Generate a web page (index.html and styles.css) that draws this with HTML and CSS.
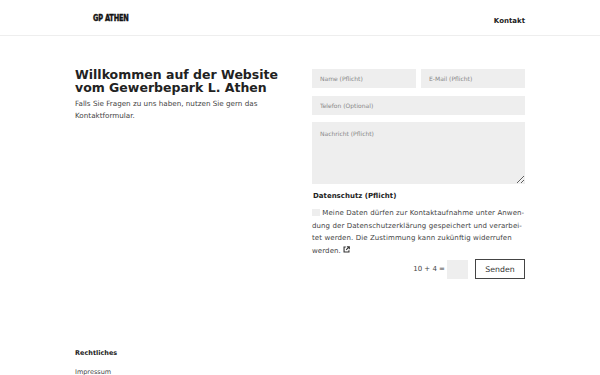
FILE: index.html
```html
<!DOCTYPE html>
<html lang="de">
<head>
    <meta charset="UTF-8">
    <meta name="viewport" content="width=device-width, initial-scale=1.0">
    <title>GP Athen</title>
    <link rel="stylesheet" href="styles.css">
</head>
<body>
    <header class="site-header">
        <a class="logo" href="#">GP ATHEN</a>
        <nav class="nav">
            <a href="#kontakt">Kontakt</a>
        </nav>
    </header>

    <main class="content">
        <section class="intro">
            <h1>Willkommen auf der Website vom Gewerbepark L. Athen</h1>
            <p>Falls Sie Fragen zu uns haben, nutzen Sie gern das Kontaktformular.</p>
        </section>

        <form class="contact" id="kontakt">
            <div class="row">
                <input type="text" placeholder="Name (Pflicht)">
                <input type="email" placeholder="E-Mail (Pflicht)">
            </div>
            <input type="tel" placeholder="Telefon (Optional)">
            <textarea placeholder="Nachricht (Pflicht)"></textarea>

            <div class="privacy">
                <h3>Datenschutz (Pflicht)</h3>
                <p>
                    <span class="check"></span>
                    Meine Daten dürfen zur Kontaktaufnahme unter Anwen&shy;dung der Datenschutzerklärung gespeichert und verarbei&shy;tet werden. Die Zustimmung kann zukünftig widerrufen werden.
                    <svg class="ext" width="7" height="7" viewBox="0 0 10 10">
                        <path d="M4 1.5H1.5v7h7V6" fill="none" stroke="#333" stroke-width="1.6"/>
                        <path d="M5.5 1h3.5v3.5M9 1L4.5 5.5" fill="none" stroke="#333" stroke-width="1.6"/>
                    </svg>
                </p>
            </div>

            <div class="submit-row">
                <label for="captcha">10 + 4 =</label>
                <input type="text" id="captcha" class="captcha">
                <button type="submit">Senden</button>
            </div>
        </form>
    </main>

    <footer class="footer">
        <h4>Rechtliches</h4>
        <a href="#">Impressum</a>
    </footer>
</body>
</html>
```

FILE: styles.css
```css
body {
    margin: 0;
    font-family: "DejaVu Sans", Verdana, sans-serif;
    color: #444;
    background: #fff;
}

a {
    text-decoration: none;
    color: inherit;
}

.site-header {
    height: 35px;
    border-bottom: 1px solid #eee;
    display: flex;
    align-items: center;
    justify-content: space-between;
    padding: 0 75px 0 93px;
}

.logo {
    font-family: "DejaVu Sans Condensed", "DejaVu Sans", sans-serif;
    font-weight: bold;
    font-size: 8.5px;
    color: #111;
    letter-spacing: -0.2px;
    -webkit-text-stroke: 0.4px #111;
    transform: scaleX(0.86);
    transform-origin: left center;
}

.nav a {
    font-size: 7px;
    font-weight: bold;
    color: #222;
}

.content {
    margin: 32px 75px 0;
    display: flex;
}

.intro {
    width: 225px;
}

.intro h1 {
    margin: 0;
    font-size: 12.5px;
    line-height: 13px;
    color: #222;
}

.intro p {
    margin: 4px 0 0;
    font-size: 7.2px;
    line-height: 12px;
    padding-right: 30px;
}

.contact {
    flex: 1;
    display: flex;
    flex-direction: column;
    gap: 8px;
    padding: 1px 0 0 12px;
}

.contact input,
.contact textarea {
    box-sizing: border-box;
    border: none;
    background: #eee;
    font-family: inherit;
    font-size: 6px;
    padding: 0 8px;
    height: 19px;
    width: 100%;
    margin: 0;
    outline: none;
}

.contact ::placeholder {
    color: #888;
}

.row {
    display: flex;
    gap: 5px;
}

.contact textarea {
    height: 62px;
    padding-top: 8px;
    resize: vertical;
    margin-top: -1px;
}

.privacy h3 {
    margin: -2px 0 0 1px;
    font-size: 7px;
    line-height: 12px;
    color: #222;
}

.privacy p {
    margin: 5px 0 0;
    font-size: 7px;
    letter-spacing: 0.1px;
    line-height: 12.5px;
    color: #444;
    hyphens: manual;
}

.check {
    display: inline-block;
    width: 8px;
    height: 7px;
    background: #eee;
    vertical-align: -1px;
}

.ext {
    vertical-align: 0;
}

.submit-row {
    display: flex;
    justify-content: flex-end;
    align-items: center;
    margin-top: -6px;
}

.submit-row label {
    font-size: 7px;
    margin-right: 2px;
}

.contact .captcha {
    width: 21px;
    height: 19px;
    padding: 0;
}

.submit-row button {
    margin-left: 7px;
    height: 20px;
    width: 50px;
    background: #fff;
    border: 1px solid #444;
    font-family: inherit;
    font-size: 7.8px;
    color: #333;
    padding: 0;
}

.footer {
    margin: 68px 75px 0;
}

.footer h4 {
    margin: 0;
    font-size: 6.5px;
    line-height: 12px;
    color: #222;
}

.footer a {
    display: block;
    margin-top: 7px;
    font-size: 6.5px;
    line-height: 12px;
    color: #444;
}
```
